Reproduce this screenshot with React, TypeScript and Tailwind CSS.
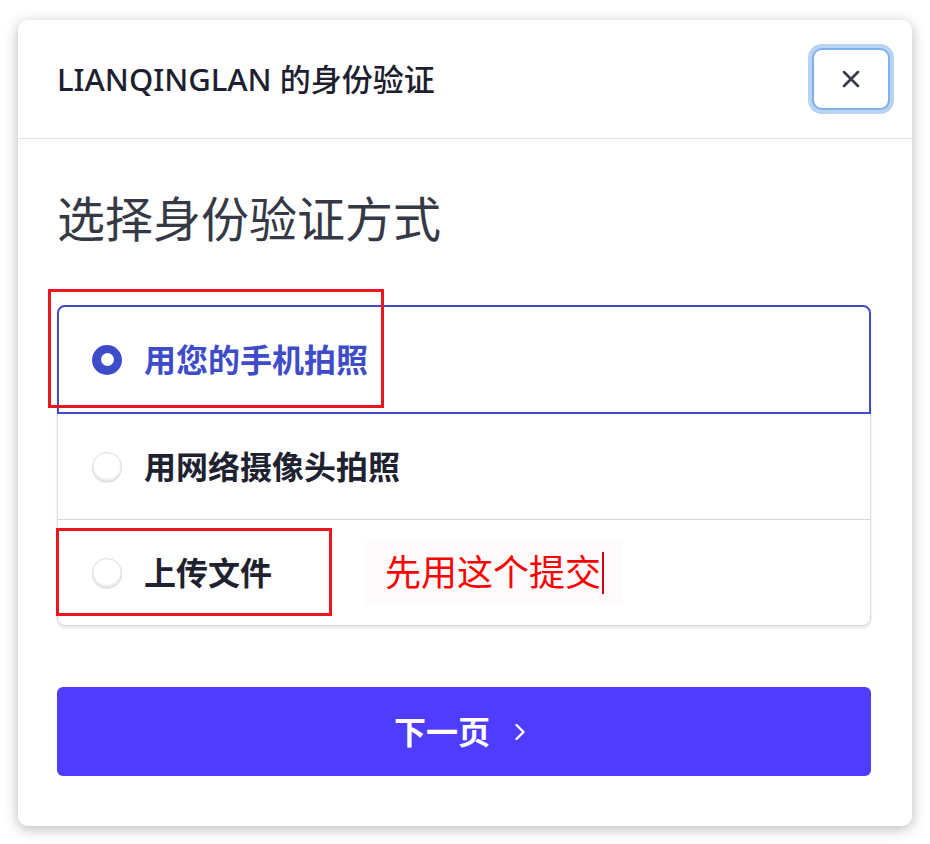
import { X, ChevronRight } from "lucide-react";

const options = [
  { id: "phone", label: "用您的手机拍照" },
  { id: "webcam", label: "用网络摄像头拍照" },
  { id: "upload", label: "上传文件" },
];

function Radio({ checked }: { checked: boolean }) {
  if (checked) {
    return (
      <span className="flex h-[30px] w-[30px] shrink-0 items-center justify-center rounded-full bg-[#3f4cc9]">
        <span className="h-[13px] w-[13px] rounded-full bg-white" />
      </span>
    );
  }
  return (
    <span className="h-[30px] w-[30px] shrink-0 rounded-full border border-[#dcdde2] bg-white shadow-[inset_0_-2px_2px_rgba(0,0,0,0.08),0_1px_1px_rgba(0,0,0,0.12)]" />
  );
}

export default function App() {
  const selected = "phone";

  return (
    <div
      className="h-[844px] w-[930px] bg-white pl-[18px] pt-[20px]"
      style={{ fontFamily: '"Noto Sans", "Noto Sans CJK SC", sans-serif' }}
    >
      <div className="relative flex h-[806px] w-[894px] flex-col rounded-[10px] bg-white shadow-[0_3px_14px_rgba(0,0,0,0.28)]">
        {/* Header */}
        <div className="flex h-[119px] items-center justify-between border-b border-[#e1e5ec] pl-[39px] pr-[22px]">
          <h2 className="text-[31px] font-medium text-[#1c2030]">LIANQINGLAN 的身份验证</h2>
          <button className="flex h-[62px] w-[78px] items-center justify-center rounded-[10px] border-[2px] border-[#7eb0ea] bg-white text-[#353a46] ring-4 ring-[#b9d3f3]">
            <X size={28} strokeWidth={2.2} />
          </button>
        </div>

        {/* Body */}
        <div className="flex flex-col pl-[39px] pr-[41px] pt-[51px]">
          <h1 className="text-[48px] leading-[58px] text-[#353945]">选择身份验证方式</h1>

          <div className="mt-[57px] rounded-[8px] shadow-[0_2px_3px_rgba(0,0,0,0.1)]">
            {options.map((opt, i) => {
              const isSel = opt.id === selected;
              return (
                <label
                  key={opt.id}
                  className={
                    isSel
                      ? "flex h-[109px] items-center gap-[22px] rounded-t-[8px] border-2 border-[#3f4cc9] pl-[33px]"
                      : i === options.length - 1
                        ? "flex h-[106px] items-center gap-[22px] rounded-b-[8px] border border-t-0 border-[#d6d8de] pl-[34px]"
                        : "flex h-[106px] items-center gap-[22px] border border-t-0 border-[#d6d8de] pl-[34px]"
                  }
                >
                  <Radio checked={isSel} />
                  <span
                    className={
                      isSel
                        ? "text-[32px] font-bold text-[#3f4cc9]"
                        : "text-[32px] font-bold text-[#1e2230]"
                    }
                  >
                    {opt.label}
                  </span>
                </label>
              );
            })}
          </div>

          <button className="mt-[61px] flex h-[89px] items-center justify-center gap-[16px] rounded-[6px] bg-[#4f3cff] text-[32px] font-semibold text-white">
            下一页
            <ChevronRight size={28} strokeWidth={2} />
          </button>
        </div>

        {/* Annotations */}
        <div className="absolute left-[30px] top-[269px] h-[119px] w-[336px] border-[3px] border-[#f0141e]" />
        <div className="absolute left-[38px] top-[508px] h-[88px] w-[276px] border-[3px] border-[#f0141e]" />
        <div className="absolute left-[347px] top-[520px] flex h-[65px] w-[257px] items-center bg-[#fdfbfb] pl-[20px]">
          <span className="text-[36px] leading-none text-[#ff0000]">先用这个提交</span>
          <span className="ml-[1px] h-[42px] w-[2px] bg-[#d00010]" />
        </div>
      </div>
    </div>
  );
}
